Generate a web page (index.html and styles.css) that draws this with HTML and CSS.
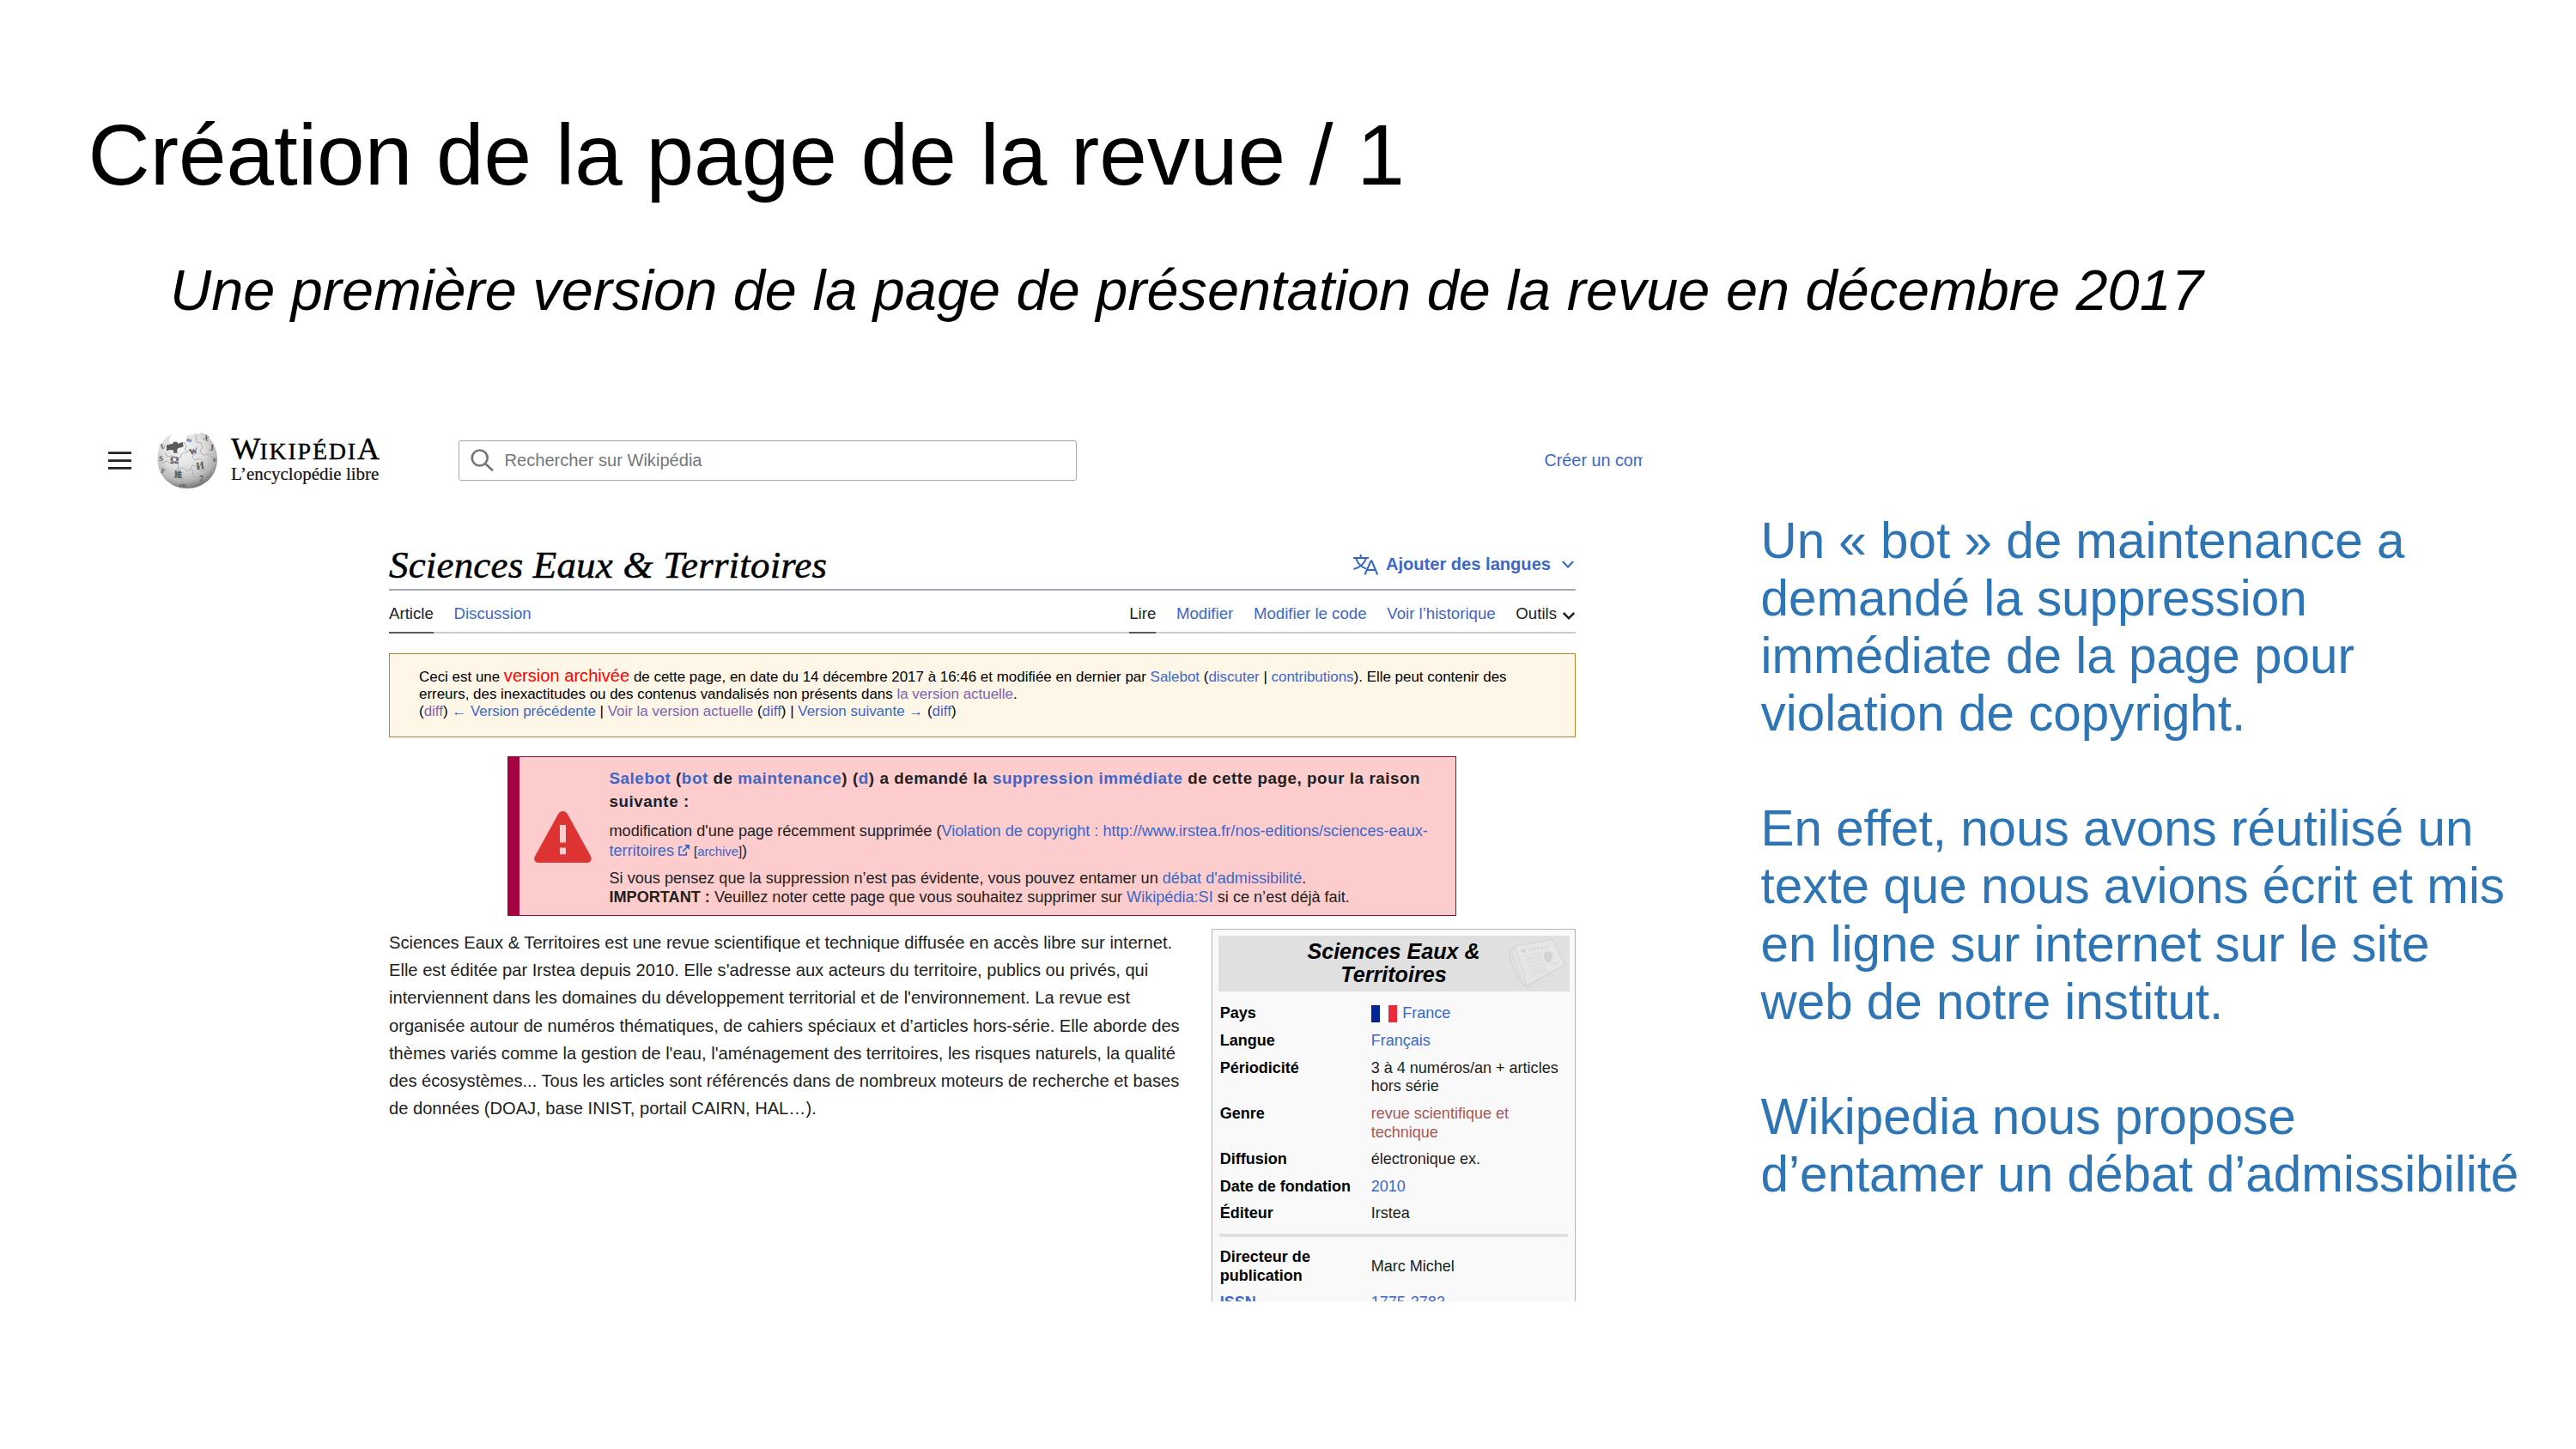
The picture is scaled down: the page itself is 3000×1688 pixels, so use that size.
FILE: index.html
```html
<!DOCTYPE html>
<html lang="fr">
<head>
<meta charset="utf-8">
<title>Création de la page de la revue / 1</title>
<link rel="stylesheet" href="styles.css">
</head>
<body>
<main class="slide">
  <h1 class="slide-title">Création de la page de la revue / 1</h1>
  <p class="slide-subtitle">Une première version de la page de présentation de la revue en décembre 2017</p>

  <div class="columns">
    <section class="wiki">
      <header class="wiki-header">
        <svg class="menu-icon" viewBox="0 0 27 21"><path d="M0 1.700h27M0 10.600h27M0 19.300h27" stroke="#202122" stroke-width="2.700"/></svg>
        <svg class="globe" viewBox="0 0 71 67">
          <defs>
            <radialGradient id="ball" cx=".42" cy=".3" r=".72">
              <stop offset="0" stop-color="#f4f4f4"/>
              <stop offset=".5" stop-color="#dedede"/>
              <stop offset=".8" stop-color="#b4b4b4"/>
              <stop offset="1" stop-color="#6e6e6e"/>
            </radialGradient>
          </defs>
          <path fill="url(#ball)" d="M17 2.500C5 9 0 20 .5 34 1.500 53 17 66 35 66s34-13 35-32C70.500 20 65 8 52 .5l-3 2.500-5-1.500-3 2.500-5-.5-3 3 1 4-4 2-5-1-4 3-6-1-1-4 2-4z"/>
          <path fill="#5a5a5a" d="M11 15.500l7-1.500 1.500-2.500 4 .5.5 2 6-2 .5 5.500-6 1.500-1.500 2.500 1 3-4.500.5-.5-3.500-4-.5-4 1z"/>
          <g fill="none" stroke="#a9a9a9" stroke-width=".9">
            <path d="M31 12l3 5-2 4 4 2 5-2 2 4-2 5 3 3 6-2 3 3-1 5"/>
            <path d="M5 36l7-2 3 3 5-2 4 2 1 6-4 2 2 5 5 1 2 6-3 5"/>
            <path d="M24 43l7-1 3 3 5-1 2-5 5 1 3 5 7-1 4 3 6-2"/>
            <path d="M45 4l1 8 5 1 2 5-3 4 3 5 7-1 3 4 6 0"/>
            <path d="M9 24l3 5 6-1 3 3 6-1 2-5 6-1M41 44l1 8 5 2-1 6"/>
          </g>
          <g class="globe-glyphs">
            <text x="15" y="37" font-size="13">Ω</text>
            <text x="38" y="27" font-size="10" transform="rotate(-12 38 27)">W</text>
            <text x="46" y="44" font-size="12" transform="rotate(-8 46 44)">И</text>
            <text x="20" y="53" font-size="9">維</text>
            <text x="49" y="58" font-size="10">7</text>
            <text x="2" y="34" font-size="9">S</text>
            <text x="4" y="20" font-size="8" transform="rotate(-50 6 18)">Z</text>
            <text x="34" y="11" font-size="7" transform="rotate(12 34 11)">m</text>
            <text x="53" y="8" font-size="9" transform="rotate(30 53 8)">X</text>
            <text x="61" y="22" font-size="10">J</text>
            <text x="65" y="35" font-size="8">e</text>
            <text x="3" y="47" font-size="8" transform="rotate(25 3 47)">T</text>
            <text x="26" y="64" font-size="7">cu</text>
          </g>
        </svg>
        <div class="brand">
          <span class="wordmark"><span class="big">W</span>IKIPÉDI<span class="big">A</span></span>
          <span class="tagline">L’encyclopédie libre</span>
        </div>
        <div class="search">
          <svg class="search-icon" viewBox="0 0 27 26"><g fill="none" stroke="#72777d" stroke-width="2.700"><circle cx="10.700" cy="10.500" r="9"/><path d="M17 17l9 8.300"/></g></svg>
          <span>Rechercher sur Wikipédia</span>
        </div>
        <a class="signup">Créer un compte</a>
      </header>

      <div class="wiki-content">
        <div class="title-row">
          <h2>Sciences Eaux &amp; Territoires</h2>
          <a class="languages">
            <svg class="lang-icon" viewBox="0 0 29 24"><g fill="none" stroke="#3366cc" stroke-width="2"><path d="M0 4h18M8.700 0v4M3 4c2 6.500 6.500 10.500 12 12.500M15 4c-2 6.500-7 11-14.500 13"/><path d="M13.500 23.500L20.500 7.500h1L28.300 23.500M16 18h10"/></g></svg>
            <span>Ajouter des langues</span>
            <svg class="chevron" viewBox="0 0 14 9"><path d="M.8 1l6.200 6.500L13.200 1" fill="none" stroke="#3366cc" stroke-width="2"/></svg>
          </a>
        </div>
        <nav class="tabs">
          <a class="tab active">Article</a>
          <a class="tab">Discussion</a>
          <a class="tab active push">Lire</a>
          <a class="tab">Modifier</a>
          <a class="tab">Modifier le code</a>
          <a class="tab">Voir l’historique</a>
          <span class="tab tools">Outils <svg class="chevron" viewBox="0 0 14 9"><path d="M.8 1l6.200 6.300L13.200 1" fill="none" stroke="#202122" stroke-width="2.500"/></svg></span>
        </nav>

        <div class="revision">
          Ceci est une <span class="archived">version archivée</span> de cette page, en date du 14 décembre 2017 à 16:46 et modifiée en dernier par <a>Salebot</a> (<a>discuter</a> | <a>contributions</a>). Elle peut contenir des<br>
          erreurs, des inexactitudes ou des contenus vandalisés non présents dans <a class="visited">la version actuelle</a>.<br>
          (<a class="visited">diff</a>) <a>← Version précédente</a> | <a class="visited">Voir la version actuelle</a> (<a>diff</a>) | <a>Version suivante →</a> (<a>diff</a>)
        </div>

        <div class="deletion">
          <svg class="warning" viewBox="0 0 67 60"><path d="M33.500 0c2.500 0 4.200 1.200 5.500 3.600L66 52.500c2 4-.3 7.500-4.300 7.500H5.300C1.300 60-1 56.500 1 52.500L28 3.600C29.300 1.200 31 0 33.500 0z" fill="#d33"/><path d="M30 16h7v20.500h-7zM30 42.500h7v7.700h-7z" fill="#fdcccc"/></svg>
          <div class="deletion-text">
            <p class="lead"><a>Salebot</a> (<a>bot</a> de <a>maintenance</a>) (<a>d</a>) a demandé la <a>suppression immédiate</a> de cette page, pour la raison<br>suivante :</p>
            <p>modification d'une page récemment supprimée (<a>Violation de copyright : http://www.irstea.fr/nos-editions/sciences-eaux-<br>territoires</a> <svg class="external" viewBox="0 0 14 14"><path d="M5 3H1v10h9V9M5.500 8.500L12 2" fill="none" stroke="#3366cc" stroke-width="1.700"/><path d="M7.500 0H14v6.500z" fill="#3366cc"/></svg> <small>[<a>archive</a>]</small>)</p>
            <p>Si vous pensez que la suppression n’est pas évidente, vous pouvez entamer un <a>débat d'admissibilité</a>.<br><b>IMPORTANT :</b> Veuillez noter cette page que vous souhaitez supprimer sur <a>Wikipédia:SI</a> si ce n’est déjà fait.</p>
          </div>
        </div>

        <div class="article-row">
          <p class="article">Sciences Eaux &amp; Territoires est une revue scientifique et technique diffusée en accès libre sur internet.<br>
            Elle est éditée par Irstea depuis 2010. Elle s'adresse aux acteurs du territoire, publics ou privés, qui<br>
            interviennent dans les domaines du développement territorial et de l'environnement. La revue est<br>
            organisée autour de numéros thématiques, de cahiers spéciaux et d’articles hors-série. Elle aborde des<br>
            thèmes variés comme la gestion de l'eau, l'aménagement des territoires, les risques naturels, la qualité<br>
            des écosystèmes... Tous les articles sont référencés dans de nombreux moteurs de recherche et bases<br>
            de données (DOAJ, base INIST, portail CAIRN, HAL…).</p>
          <aside class="infobox">
            <div class="infobox-title">
              <span>Sciences Eaux &amp;<br>Territoires</span>
              <svg class="newspaper" viewBox="0 0 68 60">
                <path d="M2 16L8 9.500 52 1.500 66 31 21 57C10 48 4 32 2 16z" fill="#e2e2e2" stroke="#d2d2d2" stroke-width="1.200"/>
                <path d="M8 9.500L52 1.500 66 31 21 55C20 40 14 24 8 9.500z" fill="#e6e6e6" stroke="#d6d6d6"/>
                <path d="M5 15c2 15 7 29 15 40" fill="none" stroke="#d5d5d5"/>
                <path d="M15 13l5-1 1 4-5 1z" fill="#d2d2d2"/>
                <path d="M24 13.500l22-4" stroke="#d8d8d8" stroke-width="3" stroke-dasharray="3 2"/>
                <path d="M18 21l20-4M20 25l20-4M21 29l20-4M23 33l19-4M24 37l20-5M25 41l20-6M26 45l18-7M51 31l9-3" stroke="#dedede" stroke-width="2"/>
                <path d="M42 18c3-4 9-3 10 1s-1 7-4 10c-4-2-7-6-6-11z" fill="#d3d3d3"/>
              </svg>
            </div>
            <dl>
              <dt>Pays</dt><dd class="with-flag"><svg class="flag" viewBox="0 0 30 20"><path fill="#fff" d="M0 0h30v20H0z"/><path fill="#002395" d="M0 0h10v20H0z"/><path fill="#ed2939" d="M20 0h10v20H20z"/></svg><a>France</a></dd>
              <dt>Langue</dt><dd><a>Français</a></dd>
              <dt>Périodicité</dt><dd>3 à 4 numéros/an + articles<br>hors série</dd>
              <dt>Genre</dt><dd><a class="missing">revue scientifique et<br>technique</a></dd>
              <dt>Diffusion</dt><dd>électronique ex.</dd>
              <dt>Date de fondation</dt><dd><a>2010</a></dd>
              <dt>Éditeur</dt><dd>Irstea</dd>
            </dl>
            <hr>
            <dl class="middle">
              <dt>Directeur de<br>publication</dt><dd>Marc Michel</dd>
              <dt><a>ISSN</a></dt><dd><a>1775-3783</a></dd>
            </dl>
          </aside>
        </div>
      </div>
    </section>

    <section class="comments">
      <p>Un « bot » de maintenance a<br>demandé la suppression<br>immédiate de la page pour<br>violation de copyright.</p>
      <p>En effet, nous avons réutilisé un<br>texte que nous avions écrit et mis<br>en ligne sur internet sur le site<br>web de notre institut.</p>
      <p>Wikipedia nous propose<br>d’entamer un débat d’admissibilité</p>
    </section>
  </div>
</main>
</body>
</html>
```
FILE: styles.css
```css
* { box-sizing: border-box; }
body { margin: 0; background: #fff; color: #202122; font-family: "Liberation Sans", Arial, sans-serif; }
h1, h2, p, dl, dd { margin: 0; font-weight: normal; }
svg { display: block; flex: none; overflow: visible; }
a { color: #3b68c8; }
a.visited { color: #7d62b3; }
a.missing { color: #a55858; }

.slide { width: 3000px; height: 1688px; overflow: hidden; white-space: nowrap; }
.slide-title { padding-top: 125px; margin-left: 102.5px; height: 236px; font-size: 99.95px; line-height: 112px; color: #000; }
.slide-subtitle { margin: 64px 0 0 198px; height: 76px; font-size: 66.67px; line-height: 76px; font-style: italic; color: #000; }

.columns { display: flex; align-items: flex-start; gap: 137.5px; margin-top: 114px; padding-left: 100px; }
.wiki { width: 1813px; height: 1026px; overflow: hidden; flex: none; }
.comments { padding-top: 106px; display: flex; flex-direction: column; gap: 67px; font-size: 58.4px; line-height: 67.1px; color: #2e75b6; }

.wiki-header { display: flex; align-items: center; height: 92px; padding-left: 26px; font-size: 20.1px; }
.wiki-header > * { flex: none; }
.menu-icon { width: 27px; height: 21px; }
.globe { width: 71px; height: 67px; margin-left: 30px; }
.globe-glyphs { fill: #555; font-family: "Liberation Serif", "Noto Sans CJK JP", serif; font-weight: bold; }
.brand { width: 279.5px; padding-left: 15px; display: flex; flex-direction: column; font-family: "Liberation Serif", serif; color: #111; }
.wordmark { position: relative; top: 1px; font-size: 28px; line-height: 34px; letter-spacing: 1.75px; color: #000; -webkit-text-stroke: .4px #000; }
.wordmark .big { font-size: 36.5px; line-height: 1px; letter-spacing: -1px; }
.tagline { font-size: 21px; line-height: 20px; margin-bottom: 2px; -webkit-text-stroke: .2px #111; }
.search { display: flex; align-items: center; gap: 13px; width: 720px; height: 47px; padding-left: 13px; border: 1.5px solid #a2a9b1; border-radius: 3px; color: #72777d; }
.search-icon { width: 27px; height: 26px; }
.signup { margin-left: 545px; font-size: 19.8px; }

.wiki-content { margin-left: 353px; width: 1382px; }
.title-row { display: flex; align-items: center; height: 106px; padding-top: 47px; border-bottom: 2px solid #a2a9b1; }
.title-row h2 { font: italic 45px/58px "Liberation Serif", serif; letter-spacing: .18px; color: #000; -webkit-text-stroke: .5px #000; }
.languages { display: flex; align-items: center; margin-left: auto; padding-right: 2px; font-size: 20.1px; font-weight: bold; }
.lang-icon { width: 29px; height: 24px; margin-right: 9px; }
.languages .chevron { margin-left: 13px; }
.chevron { width: 14px; height: 9px; }

.tabs { display: flex; gap: 23.7px; height: 50px; font-size: 18.65px; line-height: 54px; box-shadow: inset 0 -2px #c8ccd1; }
.tab { color: #3b68c8; }
.tab.active { color: #202122; box-shadow: inset 0 -2px #54595d; }
.tab.push { margin-left: auto; }
.tab.tools { display: flex; gap: 7px; padding-right: 1px; color: #202122; }
.tools .chevron { margin-top: 25px; }

.revision { height: 98px; margin-top: 23px; padding: 17px 34px; border: 1.5px solid #b8862f; background: #fef6e7; color: #000; font-size: 16.94px; line-height: 20.2px; }
.archived { color: #f00; font-size: 20.1px; line-height: 1px; }

.deletion { display: flex; width: 1105px; height: 186px; margin: 22px 0 0 138px; padding-left: 17px; align-items: flex-start; border: 1.5px solid #a50040; border-left-width: 14.5px; background: #fdcccc; }
.warning { width: 67px; height: 60px; margin-top: 63px; }
.deletion-text { margin-left: 20.5px; padding-top: 10.5px; font-size: 18.12px; line-height: 22.6px; }
.deletion-text p + p { margin-top: 9.3px; }
.deletion-text .lead { font-size: 18.8px; line-height: 27.7px; font-weight: bold; letter-spacing: .56px; }
.external { display: inline-block; width: 13px; height: 13px; }
.deletion small { font-size: 14.8px; line-height: 1px; }

.article-row { display: flex; justify-content: space-between; align-items: flex-start; margin-top: 15px; }
.article { font-size: 20.14px; line-height: 32.17px; }
.infobox { width: 424px; height: 520px; padding: 6.5px; border: 1.5px solid #b2b5b9; background: #f9f9f9; font-size: 18.05px; line-height: 21.7px; color: #202122; }
.infobox-title { position: relative; height: 65px; margin-bottom: 11px; padding-top: 5px; background: #e0e0e0; text-align: center; font-size: 25.15px; line-height: 27.7px; font-weight: bold; font-style: italic; color: #000; }
.newspaper { position: absolute; right: 4px; top: 3px; width: 68px; height: 60px; }
.infobox dl { display: grid; grid-template-columns: 176px 1fr; padding-left: 2.2px; }
.infobox dt, .infobox dd { padding: 4.95px 0; }
.infobox dt { font-weight: bold; color: #000; }
.infobox .middle { align-items: center; }
.with-flag { display: flex; align-items: center; gap: 6.5px; }
.flag { width: 30px; height: 20px; }
.infobox hr { height: 4px; margin: 7.5px 2px 7.5px 1px; border: 0; background: #e0e0e0; }
```
